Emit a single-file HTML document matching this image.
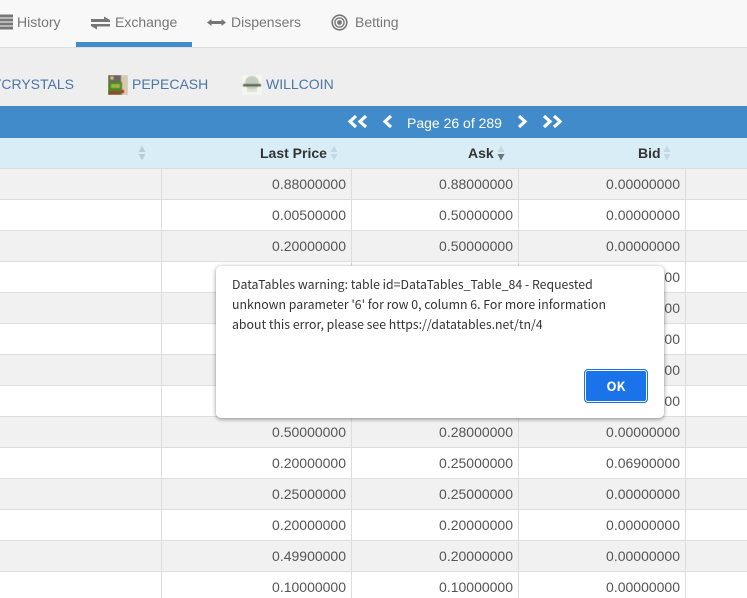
<!DOCTYPE html>
<html lang="en"><head><meta charset="utf-8"><title>Exchange</title>
<style>
html,body{margin:0;padding:0;overflow:hidden;width:747px;height:598px}
body{position:relative;background:#fff;font-family:"Liberation Sans",sans-serif;color:#555}
.a{position:absolute}
.t{position:absolute;white-space:nowrap;line-height:20px}
.tab{font-size:14px;color:#777;top:12px}
.asset{font-size:14px;color:#4a76a8;top:74px}
.row{position:absolute;left:0;width:747px;height:30px;border-bottom:1px solid #ddd}
.g{background:#f1f1f1}
.w{background:#fff}
.v{position:absolute;top:5px;line-height:20px;font-size:14px;color:#555;text-align:right;white-space:nowrap}
.c1{right:401px}.c2{right:234px}.c3{right:67px}
.l{position:absolute;width:1px;background:#ddd}
.h{position:absolute;top:143px;font-size:14px;font-weight:bold;color:#333;line-height:20px;white-space:nowrap}
.m{font-family:'Noto Sans CJK SC','DejaVu Sans',sans-serif;font-size:12.3px;color:#333;left:232px}
svg{position:absolute;display:block}
</style></head><body>
<div class="a" style="left:0;top:0;width:747px;height:47px;background:#f8f8f8;border-bottom:1px solid #ddd"></div>
<div class="a" style="left:0;top:48px;width:747px;height:58px;background:#eee"></div>
<div class="a" style="left:76px;top:42px;width:116px;height:5px;background:#428bca"></div>

<svg style="left:0;top:14px" width="14" height="16" viewBox="0 0 14 16"><path d="M0 0.500h13v3H0zM0 4.500h13v3H0zM0 8.500h13v3H0zM0 12.500h13v3H0z" fill="#777"/></svg>
<div class="t tab" style="left:17px">History</div>
<svg style="left:90px;top:15px" width="21" height="17" viewBox="0 0 21 17"><path d="M1 4h13V1.500l6 3.500v2H1zM20 9v2.500H7V14.500l-6-3.500V9z" fill="#777"/></svg>
<div class="t tab" style="left:115px">Exchange</div>
<svg style="left:207px;top:18px" width="19" height="9" viewBox="0 0 19 9"><path d="M0 4.500L4.500 1v2h10V1L19 4.500 14.500 8V6h-10v2z" fill="#777"/></svg>
<div class="t tab" style="left:231px">Dispensers</div>
<svg style="left:331px;top:14px" width="17" height="17" viewBox="0 0 17 17"><circle cx="8.500" cy="8.500" r="7.300" fill="none" stroke="#777" stroke-width="1.600"/><circle cx="8.500" cy="8.500" r="4.600" fill="none" stroke="#777" stroke-width="1.400"/><circle cx="8.500" cy="8.500" r="2.400" fill="#777"/></svg>
<div class="t tab" style="left:355px">Betting</div>

<div class="t asset" style="right:673px">TCRYSTALS</div>
<svg style="left:108px;top:75px" width="20" height="20" viewBox="0 0 20 20"><g style="filter:blur(.4px)"><rect width="20" height="20" fill="#b9a98a"/><rect x="0" y="0" width="13" height="7" fill="#6d6a58"/><rect x="1" y="1" width="9" height="3" fill="#6b5a8e"/><rect x="13" y="0" width="7" height="20" fill="#d6c9b0"/><rect x="0" y="7" width="14" height="13" fill="#4c8528"/><rect x="3" y="9" width="9" height="4" fill="#9db53c"/><rect x="0" y="16" width="12" height="4" fill="#8a4f26"/><circle cx="4" cy="3" r="1.800" fill="#e0c850"/><rect x="13" y="15" width="3" height="3" fill="#c9281f"/></g></svg>
<div class="t asset" style="left:132px">PEPECASH</div>
<svg style="left:242px;top:75px" width="20" height="20" viewBox="0 0 20 20"><g style="filter:blur(.5px)"><rect width="20" height="20" fill="#f6f6f0"/><circle cx="10" cy="8" r="7" fill="#c3cdbd"/><rect x="1" y="9" width="18" height="2.500" fill="#5f6a5c"/><rect x="5" y="14" width="10" height="3" fill="#dfe3d2"/></g></svg>
<div class="t asset" style="left:266px">WILLCOIN</div>

<div class="a" style="left:0;top:106px;width:747px;height:32px;background:#428bca"></div>
<svg style="left:347px;top:114px" width="22" height="15" viewBox="0 0 22 15"><path d="M9 2L3 7.500 9 13M19 2l-6 5.500 6 5.500" fill="none" stroke="#fff" stroke-width="3.200"/></svg>
<svg style="left:382px;top:114px" width="11" height="15" viewBox="0 0 11 15"><path d="M9 2L3 7.500 9 13" fill="none" stroke="#fff" stroke-width="3.200"/></svg>
<div class="t" style="left:407px;top:113px;font-size:14px;color:#fff">Page 26 of 289</div>
<svg style="left:517px;top:114px" width="11" height="15" viewBox="0 0 11 15"><path d="M2 2l6 5.500L2 13" fill="none" stroke="#fff" stroke-width="3.200"/></svg>
<svg style="left:541px;top:114px" width="22" height="15" viewBox="0 0 22 15"><path d="M3 2l6 5.500L3 13M13 2l6 5.500L13 13" fill="none" stroke="#fff" stroke-width="3.200"/></svg>

<div class="a" style="left:0;top:138px;width:747px;height:30px;background:#d9edf7;border-bottom:1px solid #ddd"></div>

<div class="row g" style="top:169px"><span class="v c1">0.88000000</span><span class="v c2">0.88000000</span><span class="v c3">0.00000000</span></div>
<div class="row w" style="top:200px"><span class="v c1">0.00500000</span><span class="v c2">0.50000000</span><span class="v c3">0.00000000</span></div>
<div class="row g" style="top:231px"><span class="v c1">0.20000000</span><span class="v c2">0.50000000</span><span class="v c3">0.00000000</span></div>
<div class="row w" style="top:262px"><span class="v c3">0.00000000</span></div>
<div class="row g" style="top:293px"><span class="v c3">0.00000000</span></div>
<div class="row w" style="top:324px"><span class="v c3">0.00000000</span></div>
<div class="row g" style="top:355px"><span class="v c3">0.00000000</span></div>
<div class="row w" style="top:386px"><span class="v c3">0.00000000</span></div>
<div class="row g" style="top:417px"><span class="v c1">0.50000000</span><span class="v c2">0.28000000</span><span class="v c3">0.00000000</span></div>
<div class="row w" style="top:448px"><span class="v c1">0.20000000</span><span class="v c2">0.25000000</span><span class="v c3">0.06900000</span></div>
<div class="row g" style="top:479px"><span class="v c1">0.25000000</span><span class="v c2">0.25000000</span><span class="v c3">0.00000000</span></div>
<div class="row w" style="top:510px"><span class="v c1">0.20000000</span><span class="v c2">0.20000000</span><span class="v c3">0.00000000</span></div>
<div class="row g" style="top:541px"><span class="v c1">0.49900000</span><span class="v c2">0.20000000</span><span class="v c3">0.00000000</span></div>
<div class="row w" style="top:572px;height:26px;border-bottom:0"><span class="v c1">0.10000000</span><span class="v c2">0.10000000</span><span class="v c3">0.00000000</span></div>

<div class="l" style="left:161px;top:169px;height:429px"></div>
<div class="l" style="left:351px;top:169px;height:429px"></div>
<div class="l" style="left:518px;top:169px;height:429px"></div>
<div class="l" style="left:685px;top:169px;height:429px"></div>

<div class="h" style="left:260px">Last Price</div>
<div class="h" style="left:468px">Ask</div>
<div class="h" style="left:638px">Bid</div>
<svg style="left:137px;top:145px" width="10" height="16" viewBox="0 0 10 16"><path d="M5 0.500L8.500 7h-7zM1.500 9h7L5 15.500z" fill="#b9cdd6"/></svg>
<svg style="left:329px;top:145px" width="10" height="16" viewBox="0 0 10 16"><path d="M5 0.500L8.500 7h-7zM1.500 9h7L5 15.500z" fill="#c4d8e2"/></svg>
<svg style="left:496px;top:145px" width="10" height="16" viewBox="0 0 10 16"><path d="M5 0.500L8.500 7h-7z" fill="#c4d8e2"/><path d="M1.500 9h7L5 15.500z" fill="#6a7479"/></svg>
<svg style="left:662px;top:145px" width="10" height="16" viewBox="0 0 10 16"><path d="M5 0.500L8.500 7h-7zM1.500 9h7L5 15.500z" fill="#c4d8e2"/></svg>

<div class="a" style="left:216px;top:266px;width:448px;height:152px;background:#fff;border-radius:5px;box-shadow:0 1px 4px rgba(0,0,0,.45)"></div>
<div class="t m" style="top:274px">DataTables warning: table id=DataTables_Table_84 - Requested</div>
<div class="t m" style="top:294px">unknown parameter '6' for row 0, column 6. For more information</div>
<div class="t m" style="top:314px">about this error, please see https://datatables.net/tn/4</div>
<div class="a" style="left:584px;top:369px;width:64px;height:34px;box-sizing:border-box;background:#1a73e8;border:1px solid #1a73e8;box-shadow:inset 0 0 0 1px #fff;border-radius:4px;color:#fff;font-family:'Noto Sans CJK SC','DejaVu Sans',sans-serif;font-weight:bold;font-size:13px;line-height:31px;text-align:center">OK</div>
</body></html>
